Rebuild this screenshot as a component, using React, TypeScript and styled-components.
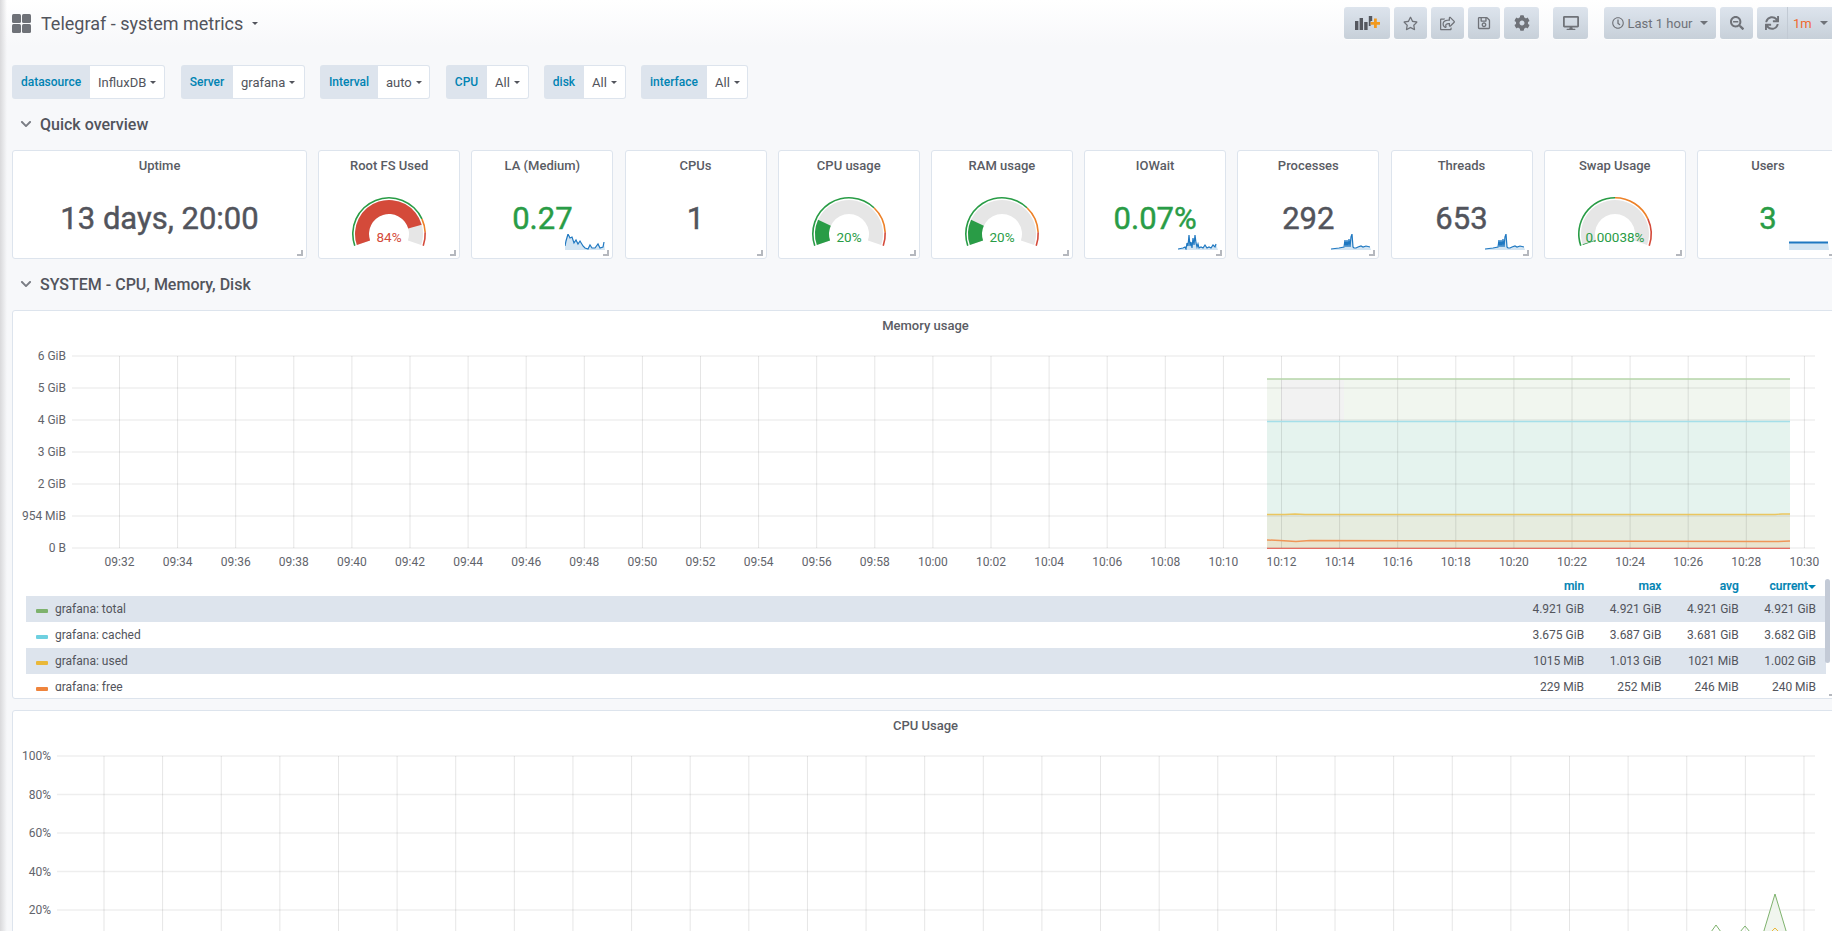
import React from "react";
import styled, { createGlobalStyle } from "styled-components";
import {
  FaChevronDown,
  FaCog,
  FaDesktop,
  FaRegClock,
  FaRegSave,
  FaRegShareSquare,
  FaRegStar,
  FaSearchMinus,
  FaSync,
} from "react-icons/fa";

const GlobalStyle = createGlobalStyle`
  html, body {
    margin: 0;
    padding: 0;
    height: 100%;
    overflow: hidden;
    background: #f7f8fa;
  }
  body {
    font-family: Roboto, "Liberation Sans", sans-serif;
    font-size: 13px;
    color: #52545c;
  }
`;

const GREEN = "#299c46";
const TEXT = "#52545c";

// ---------- gauges

const polar = (cx: number, cy: number, r: number, deg: number) => {
  // 0 is the start of the gauge, lower left; 1 is the end, lower right
  const a = ((199 - deg * 218) * Math.PI) / 180;
  return [cx + r * Math.cos(a), cy - r * Math.sin(a)];
};

const bandPath = (from: number, to: number, outer: number, inner: number) => {
  const [x1, y1] = polar(40, 38, outer, from);
  const [x2, y2] = polar(40, 38, outer, to);
  const [x3, y3] = polar(40, 38, inner, to);
  const [x4, y4] = polar(40, 38, inner, from);
  const large = (to - from) * 218 > 180 ? 1 : 0;
  return `M${x1} ${y1} A${outer} ${outer} 0 ${large} 1 ${x2} ${y2} L${x3} ${y3} A${inner} ${inner} 0 ${large} 0 ${x4} ${y4} Z`;
};

type GaugeProps = {
  value: number;
  label: string;
  color: string;
  warn: number;
  crit: number;
};

function Gauge({ value, label, color, warn, crit }: GaugeProps) {
  return (
    <GaugeSvg viewBox="0 0 80 54">
      <path d={bandPath(0, warn, 37, 35.4)} fill="#299c46" />
      <path d={bandPath(warn, crit, 37, 35.4)} fill="#ed8128" />
      <path d={bandPath(crit, 1, 37, 35.4)} fill="#d44a3a" />
      <path d={bandPath(0, 1, 34, 20)} fill="#e6e6e6" />
      <path d={bandPath(0, Math.max(value, 0.007), 34, 20)} fill={color} />
      <text x="40" y="45.5" textAnchor="middle" fontSize="13.5" fill={color}>
        {label}
      </text>
    </GaugeSvg>
  );
}

// ---------- sparklines

type SparkProps = { points: string; height?: number; right?: number; line?: number };

function Spark({ points, height = 16, right = 7, line = 1.2 }: SparkProps) {
  return (
    <SparkSvg $right={right} width="40" height={height} viewBox={`0 0 40 ${height}`}>
      <polygon points={`0,${height} ${points} 40,${height}`} fill="rgba(31,118,189,0.2)" />
      <polyline points={points} fill="none" stroke="#1f78c1" strokeWidth={line} />
    </SparkSvg>
  );
}

const sparkLoad = "0,12 1,7 3,0 5,4 7,3 9,9 11,6 13,10 15,7 18,12 20,14 23,15 25,11 27,14 30,14 33,10 35,14 38,13 39,8";
const sparkWait = "0,15 5,14 7,13 8,15 9,9 10,12 11,1 12,12 13,8 14,14 15,4 16,11 17,1 18,9 19,13 20,10 21,14 23,13 25,14 27,11 29,14 31,13 33,14 35,11 37,13 38,10";
const sparkProc = "0,15 8,14 13,13 14,6 15,13 16,6 17,13 18,5 19,13 20,3 21,0 22,13 23,14 25,14 27,13 30,12 32,13 35,12 39,13";

// ---------- graphs

type Series = { color: string; points: string; width: number };

const range = (n: number) => Array.from({ length: n }, (_, i) => i);

const times = range(30).map((i) => {
  const total = 9 * 60 + 32 + i * 2;
  const m = total % 60;
  return `${String(Math.floor(total / 60)).padStart(2, "0")}:${String(m).padStart(2, "0")}`;
});

const memoryLines: Series[] = [
  { color: "#b5d5a8", width: 1.7, points: "1267,379 1790,379" },
  { color: "#a5dfe9", width: 1.7, points: "1267,421.5 1790,421.5" },
  { color: "#eac660", width: 1.4, points: "1267,514.5 1285,514.5 1295,514 1305,514.5 1775,514.5 1782,514 1790,514" },
  { color: "#ef9658", width: 1.5, points: "1267,540 1280,540.5 1296,541.5 1310,540.5 1500,541 1770,541.5 1778,541.5 1790,541" },
];

const memoryFills = [
  { y: 379, h: 43, fill: "#f1f6ef" },
  { y: 422, h: 92, fill: "#e5f3ee" },
  { y: 514, h: 27, fill: "#e6ecdf" },
  { y: 541, h: 7, fill: "#e9e4ce" },
];

const memoryAxis = [
  { y: 356, label: "6 GiB" },
  { y: 388, label: "5 GiB" },
  { y: 420, label: "4 GiB" },
  { y: 452, label: "3 GiB" },
  { y: 484, label: "2 GiB" },
  { y: 516, label: "954 MiB" },
  { y: 548, label: "0 B" },
];

const cpuAxis = [
  { y: 756, label: "100%" },
  { y: 794.5, label: "80%" },
  { y: 833, label: "60%" },
  { y: 871.5, label: "40%" },
  { y: 910, label: "20%" },
];

const legendRows = [
  { name: "grafana: total", color: "#7eb26d", values: ["4.921 GiB", "4.921 GiB", "4.921 GiB", "4.921 GiB"] },
  { name: "grafana: cached", color: "#6ed0e0", values: ["3.675 GiB", "3.687 GiB", "3.681 GiB", "3.682 GiB"] },
  { name: "grafana: used", color: "#eab839", values: ["1015 MiB", "1.013 GiB", "1021 MiB", "1.002 GiB"] },
  { name: "grafana: free", color: "#ef843c", values: ["229 MiB", "252 MiB", "246 MiB", "240 MiB"] },
];

function AddPanelIcon() {
  return (
    <svg width="25" height="14" viewBox="0 0 25 14">
      <rect x="0" y="5" width="3.4" height="9" fill="#55585f" />
      <rect x="4.6" y="2" width="3.4" height="12" fill="#55585f" />
      <rect x="9.2" y="6" width="3.4" height="8" fill="#55585f" />
      <path d="M13.8 0h3.4v5h-1.6v5h-1.8z" fill="#55585f" />
      <path d="M19 2.5h2.8v3.4h3.2v2.8h-3.2v3.4H19V8.7h-3.4V5.9H19z" fill="#f29a1f" />
    </svg>
  );
}

function DashIcon() {
  return (
    <svg width="19" height="19" viewBox="0 0 19 19">
      <rect x="0" y="0" width="9" height="9" rx="1.5" fill="#6f7278" />
      <rect x="10" y="0" width="9" height="9" rx="1.5" fill="#6f7278" />
      <rect x="0" y="10" width="9" height="9" rx="1.5" fill="#6f7278" />
      <rect x="10" y="10" width="9" height="9" rx="1.5" fill="#6f7278" />
    </svg>
  );
}

const templates = [
  { label: "datasource", value: "InfluxDB", labelWidth: 78, valueWidth: 75, gap: 16 },
  { label: "Server", value: "grafana", labelWidth: 52, valueWidth: 72, gap: 15 },
  { label: "Interval", value: "auto", labelWidth: 58, valueWidth: 52, gap: 16 },
  { label: "CPU", value: "All", labelWidth: 41, valueWidth: 42, gap: 15 },
  { label: "disk", value: "All", labelWidth: 40, valueWidth: 42, gap: 15 },
  { label: "interface", value: "All", labelWidth: 66, valueWidth: 41, gap: 0 },
];

export default function App() {
  return (
    <>
      <GlobalStyle />
      <Page>
        <SideShadow />
        <Navbar>
          <DashTitle>
            <DashIcon />
            <TitleText>Telegraf - system metrics</TitleText>
            <Caret $size={3.5} $color="#52545c" />
          </DashTitle>
          <Toolbar>
            <NavGroup $mr={14}>
              <NavButton $w={46}><AddPanelIcon /></NavButton>
              <NavButton $w={33}><FaRegStar size={15} /></NavButton>
              <NavButton $w={33}><FaRegShareSquare size={15} /></NavButton>
              <NavButton $w={32}><FaRegSave size={14} /></NavButton>
              <NavButton $w={35}><FaCog size={16} /></NavButton>
            </NavGroup>
            <NavGroup $mr={16}>
              <NavButton $w={35}><FaDesktop size={16} /></NavButton>
            </NavGroup>
            <NavGroup $mr={0}>
              <NavButton $w={112}>
                <FaRegClock size={12} />
                <TimeText>Last 1 hour</TimeText>
                <Caret $size={4} $color="#6f7278" />
              </NavButton>
              <NavButton $w={33}><FaSearchMinus size={14} /></NavButton>
              <RefreshGroup>
                <RefreshIcon><FaSync size={14} /></RefreshIcon>
                <RefreshRate>1m</RefreshRate>
                <Caret $size={4} $color="#6f7278" />
              </RefreshGroup>
            </NavGroup>
          </Toolbar>
        </Navbar>

        <Templates>
          {templates.map((t) => (
            <Template key={t.label} $gap={t.gap}>
              <TemplateLabel $w={t.labelWidth}>{t.label}</TemplateLabel>
              <TemplateValue $w={t.valueWidth}>
                {t.value}
                <Caret $size={3.5} $color="#52545c" />
              </TemplateValue>
            </Template>
          ))}
        </Templates>

        <RowHeader>
          <FaChevronDown size={12} />
          <span>Quick overview</span>
        </RowHeader>

        <StatGrid>
          <Stat title="Uptime"><BigValue $color={TEXT}>13 days, 20:00</BigValue></Stat>
          <Stat title="Root FS Used">
            <Gauge value={0.84} label="84%" color="#d44a3a" warn={0.8} crit={0.9} />
          </Stat>
          <Stat title="LA (Medium)">
            <BigValue $color={GREEN}>0.27</BigValue>
            <Spark points={sparkLoad} />
          </Stat>
          <Stat title="CPUs"><BigValue $color={TEXT}>1</BigValue></Stat>
          <Stat title="CPU usage">
            <Gauge value={0.2} label="20%" color={GREEN} warn={0.7} crit={0.9} />
          </Stat>
          <Stat title="RAM usage">
            <Gauge value={0.2} label="20%" color={GREEN} warn={0.7} crit={0.9} />
          </Stat>
          <Stat title="IOWait">
            <BigValue $color={GREEN}>0.07%</BigValue>
            <Spark points={sparkWait} />
          </Stat>
          <Stat title="Processes">
            <BigValue $color={TEXT}>292</BigValue>
            <Spark points={sparkProc} />
          </Stat>
          <Stat title="Threads">
            <BigValue $color={TEXT}>653</BigValue>
            <Spark points={sparkProc} />
          </Stat>
          <Stat title="Swap Usage">
            <Gauge value={0} label="0.00038%" color={GREEN} warn={0.5} crit={0.8} />
          </Stat>
          <Stat title="Users">
            <BigValue $color={GREEN}>3</BigValue>
            <Spark points="0,1.5 39,1.5" height={9} right={9} line={2} />
          </Stat>
        </StatGrid>

        <RowHeader>
          <FaChevronDown size={12} />
          <span>SYSTEM - CPU, Memory, Disk</span>
        </RowHeader>

        <GraphPanel $h={389}>
          <GraphTitle>Memory usage</GraphTitle>
          <GraphSvg viewBox="13 341 1826 234" width="1826" height="234">
            {memoryFills.map((f) => (
              <rect key={f.y} x="1267" y={f.y} width="523" height={f.h} fill={f.fill} />
            ))}
            <rect x="1281" y="380" width="63" height="41" fill="#f2f2f2" />
            {memoryAxis.map((a) => (
              <g key={a.y}>
                <line x1="72" x2="1815" y1={a.y} y2={a.y} stroke="rgba(0,0,0,0.065)" strokeWidth="1.4" />
                <AxisText x="66" y={a.y + 4} textAnchor="end">{a.label}</AxisText>
              </g>
            ))}
            {times.map((t, i) => {
              const x = 119.5 + i * 58.1;
              return (
                <g key={t}>
                  <line x1={x} x2={x} y1="356" y2="548" stroke="rgba(0,0,0,0.1)" />
                  <AxisText x={x} y="566" textAnchor="middle">{t}</AxisText>
                </g>
              );
            })}
            {memoryLines.map((s) => (
              <polyline key={s.color} points={s.points} fill="none" stroke={s.color} strokeWidth={s.width} />
            ))}
            <line x1="1267" x2="1790" y1="548.3" y2="548.3" stroke="#e24d42" strokeWidth="1" />
          </GraphSvg>
          <Legend>
            <LegendHead>
              <LegendName />
              <HeadCell>min</HeadCell>
              <HeadCell>max</HeadCell>
              <HeadCell>avg</HeadCell>
              <HeadCell>current<HeadCaret /></HeadCell>
            </LegendHead>
            {legendRows.map((row, i) => (
              <LegendRow key={row.name} $striped={i % 2 === 0}>
                <LegendName>
                  <Swatch $color={row.color} />
                  {row.name}
                </LegendName>
                {row.values.map((v, j) => (
                  <ValueCell key={j}>{v}</ValueCell>
                ))}
              </LegendRow>
            ))}
            <ScrollThumb />
          </Legend>
          <ResizeHandle />
        </GraphPanel>

        <GraphPanel $h={260}>
          <GraphTitle>CPU Usage</GraphTitle>
          <GraphSvg viewBox="13 741 1826 199" width="1826" height="199">
            {cpuAxis.map((a) => (
              <g key={a.y}>
                <line x1="57" x2="1815" y1={a.y} y2={a.y} stroke="rgba(0,0,0,0.065)" strokeWidth="1.4" />
                <AxisText x="51" y={a.y + 4} textAnchor="end">{a.label}</AxisText>
              </g>
            ))}
            {range(30).map((i) => {
              const x = 104 + i * 58.62;
              return <line key={i} x1={x} x2={x} y1="756" y2="940" stroke="rgba(0,0,0,0.1)" />;
            })}
            <polygon points="1763,934 1775,894 1787,934" fill="#f0f5ee" />
            <polyline points="1711,932 1716,925 1721,932" fill="none" stroke="#7eb26d" strokeWidth="1" />
            <polyline points="1740,932 1745,926 1750,932" fill="none" stroke="#7eb26d" strokeWidth="1" />
            <polyline points="1763,934 1775,894 1787,934" fill="none" stroke="#7eb26d" strokeWidth="1" />
            <polyline points="1771,932 1775,928 1779,932" fill="none" stroke="#eab839" strokeWidth="1" />
          </GraphSvg>
        </GraphPanel>
      </Page>
    </>
  );
}

function Stat({ title, children }: { title: string; children: React.ReactNode }) {
  return (
    <StatPanel>
      <StatTitle>{title}</StatTitle>
      <StatBody>{children}</StatBody>
      <ResizeHandle />
    </StatPanel>
  );
}

const Page = styled.div`
  position: relative;
  width: 1832px;
  height: 931px;
  overflow: hidden;
  padding-left: 12px;
  box-sizing: border-box;
  background: #f7f8fa;
`;

const SideShadow = styled.div`
  position: absolute;
  left: 0;
  top: 0;
  bottom: 0;
  width: 7px;
  background: linear-gradient(90deg, #d9d9db, rgba(240, 240, 242, 0));
  z-index: 5;
`;

const Navbar = styled.header`
  display: flex;
  align-items: flex-start;
  justify-content: space-between;
  height: 46px;
  margin-left: -12px;
  padding-left: 12px;
  padding-top: 7px;
  box-sizing: border-box;
  background: linear-gradient(180deg, #ffffff, #f7f8fa);
`;

const DashTitle = styled.div`
  display: flex;
  align-items: center;
  height: 32px;
`;

const TitleText = styled.span`
  margin-left: 10px;
  margin-right: 6px;
  font-size: 18px;
  color: ${TEXT};
`;

const Toolbar = styled.div`
  display: flex;
  width: 488px;
  flex: none;
`;

const NavGroup = styled.div<{ $mr: number }>`
  display: flex;
  gap: 4px;
  margin-right: ${(p) => p.$mr}px;
`;

const NavButton = styled.div<{ $w: number }>`
  display: flex;
  align-items: center;
  justify-content: center;
  width: ${(p) => p.$w}px;
  height: 32px;
  box-sizing: border-box;
  border-radius: 3px;
  background: linear-gradient(180deg, #dde4ed, #c7d0d9);
  color: #6f7278;
  font-size: 13px;
  box-shadow: 0 1px 0 rgba(255, 255, 255, 0.6);
`;

const TimeText = styled.span`
  margin: 0 5px 0 4px;
`;

const RefreshGroup = styled(NavButton).attrs({ $w: 80 })`
  justify-content: flex-start;
`;

const RefreshIcon = styled.span`
  display: flex;
  align-items: center;
  justify-content: center;
  width: 31px;
  height: 32px;
  border-right: 1px solid #c2cad4;
  box-sizing: border-box;
`;

const RefreshRate = styled.span`
  margin: 0 5px;
  color: #f0682e;
`;

const Caret = styled.i<{ $size: number; $color: string }>`
  display: inline-block;
  width: 0;
  height: 0;
  margin-left: 3px;
  vertical-align: middle;
  border-left: ${(p) => p.$size}px solid transparent;
  border-right: ${(p) => p.$size}px solid transparent;
  border-top: ${(p) => p.$size}px solid ${(p) => p.$color};
`;

const HeadCaret = styled.i`
  display: inline-block;
  width: 0;
  height: 0;
  vertical-align: middle;
  border-left: 4px solid transparent;
  border-right: 4px solid transparent;
  border-top: 4px solid #0083b3;
`;

const Templates = styled.div`
  display: flex;
  margin-top: 19px;
`;

const Template = styled.div<{ $gap: number }>`
  display: flex;
  height: 34px;
  margin-right: ${(p) => p.$gap}px;
  font-size: 12px;
`;

const TemplateLabel = styled.div<{ $w: number }>`
  display: flex;
  align-items: center;
  justify-content: center;
  width: ${(p) => p.$w}px;
  border-radius: 3px 0 0 3px;
  background: #dde4ed;
  color: #0083b3;
  font-weight: 500;
`;

const TemplateValue = styled.div<{ $w: number }>`
  display: flex;
  align-items: center;
  width: ${(p) => p.$w}px;
  padding: 0 7px 0 8px;
  gap: 1px;
  box-sizing: border-box;
  background: #fff;
  border: 1px solid #dde4ed;
  border-left: none;
  border-radius: 0 3px 3px 0;
  font-size: 13px;
  color: ${TEXT};
`;

const RowHeader = styled.div`
  display: flex;
  align-items: center;
  gap: 8px;
  height: 30px;
  margin-top: 10px;
  margin-bottom: 11px;
  padding-left: 8px;
  font-size: 16px;
  font-weight: 500;
  color: ${TEXT};

  svg {
    color: #7a7d84;
  }
`;

const StatGrid = styled.div`
  display: grid;
  grid-template-columns: 295px repeat(10, 142px);
  column-gap: 11.2px;
  height: 109px;
`;

const StatPanel = styled.section`
  position: relative;
  display: flex;
  flex-direction: column;
  box-sizing: border-box;
  height: 109px;
  background: #fff;
  border: 1px solid #dde4ed;
  border-radius: 3px;
`;

const StatTitle = styled.div`
  padding-top: 6px;
  height: 30px;
  box-sizing: border-box;
  line-height: 18px;
  text-align: center;
  font-weight: 500;
  font-size: 13px;
  color: #5a5c64;
`;

const StatBody = styled.div`
  position: relative;
  flex: 1;
  display: flex;
  justify-content: center;
`;

const BigValue = styled.div<{ $color: string }>`
  margin-top: 18px;
  font-size: 31px;
  line-height: 40px;
  font-weight: 400;
  -webkit-text-stroke: 0.45px ${(p) => p.$color};
  color: ${(p) => p.$color};
`;

const GaugeSvg = styled.svg`
  position: absolute;
  left: 50%;
  top: 15px;
  width: 80px;
  height: 54px;
  margin-left: -40px;
`;

const SparkSvg = styled.svg<{ $right: number }>`
  position: absolute;
  right: ${(p) => p.$right}px;
  bottom: 8px;
`;

const ResizeHandle = styled.div`
  position: absolute;
  right: 3px;
  bottom: 2px;
  width: 4px;
  height: 4px;
  border-right: 2px solid #b5b8be;
  border-bottom: 2px solid #b5b8be;
`;

const GraphPanel = styled.section<{ $h: number }>`
  position: relative;
  width: 1827px;
  height: ${(p) => p.$h}px;
  margin-bottom: 11px;
  box-sizing: border-box;
  background: #fff;
  border: 1px solid #dde4ed;
  border-radius: 3px;
`;

const GraphTitle = styled.div`
  height: 30px;
  padding-top: 6px;
  box-sizing: border-box;
  line-height: 18px;
  text-align: center;
  font-weight: 500;
  font-size: 13px;
  color: #5a5c64;
`;

const GraphSvg = styled.svg`
  display: block;
`;

const AxisText = styled.text`
  font-family: Roboto, "Liberation Sans", sans-serif;
  font-size: 12px;
  fill: #62646b;
`;

const Legend = styled.div`
  position: relative;
  margin: 4px 0 0 13px;
  height: 112px;
  overflow: hidden;
  font-size: 12px;
`;

const LegendHead = styled.div`
  display: flex;
  width: 1800px;
  box-sizing: border-box;
  height: 17px;
  line-height: 15px;
  padding-right: 10px;
  color: #0083b3;
  font-weight: 500;
  -webkit-text-stroke: 0.2px #0083b3;
`;

const LegendRow = styled.div<{ $striped: boolean }>`
  display: flex;
  align-items: center;
  height: 26px;
  background: ${(p) => (p.$striped ? "#dde4ed" : "transparent")};
  width: 1800px;
  box-sizing: border-box;
  padding-right: 10px;
  color: ${TEXT};
`;

const LegendName = styled.div`
  display: flex;
  align-items: center;
  flex: 1;
  padding-left: 10px;
`;

const Swatch = styled.i<{ $color: string }>`
  display: block;
  width: 12px;
  height: 4px;
  margin: 3px 7px 0 0;
  border-radius: 1px;
  background: ${(p) => p.$color};
`;

const HeadCell = styled.div`
  width: 77.3px;
  text-align: right;
`;

const ValueCell = styled.div`
  width: 77.3px;
  text-align: right;
`;

const ScrollThumb = styled.div`
  position: absolute;
  left: 1799px;
  top: 0;
  width: 5px;
  height: 84px;
  border-radius: 3px;
  background: #c3cad6;
`;
